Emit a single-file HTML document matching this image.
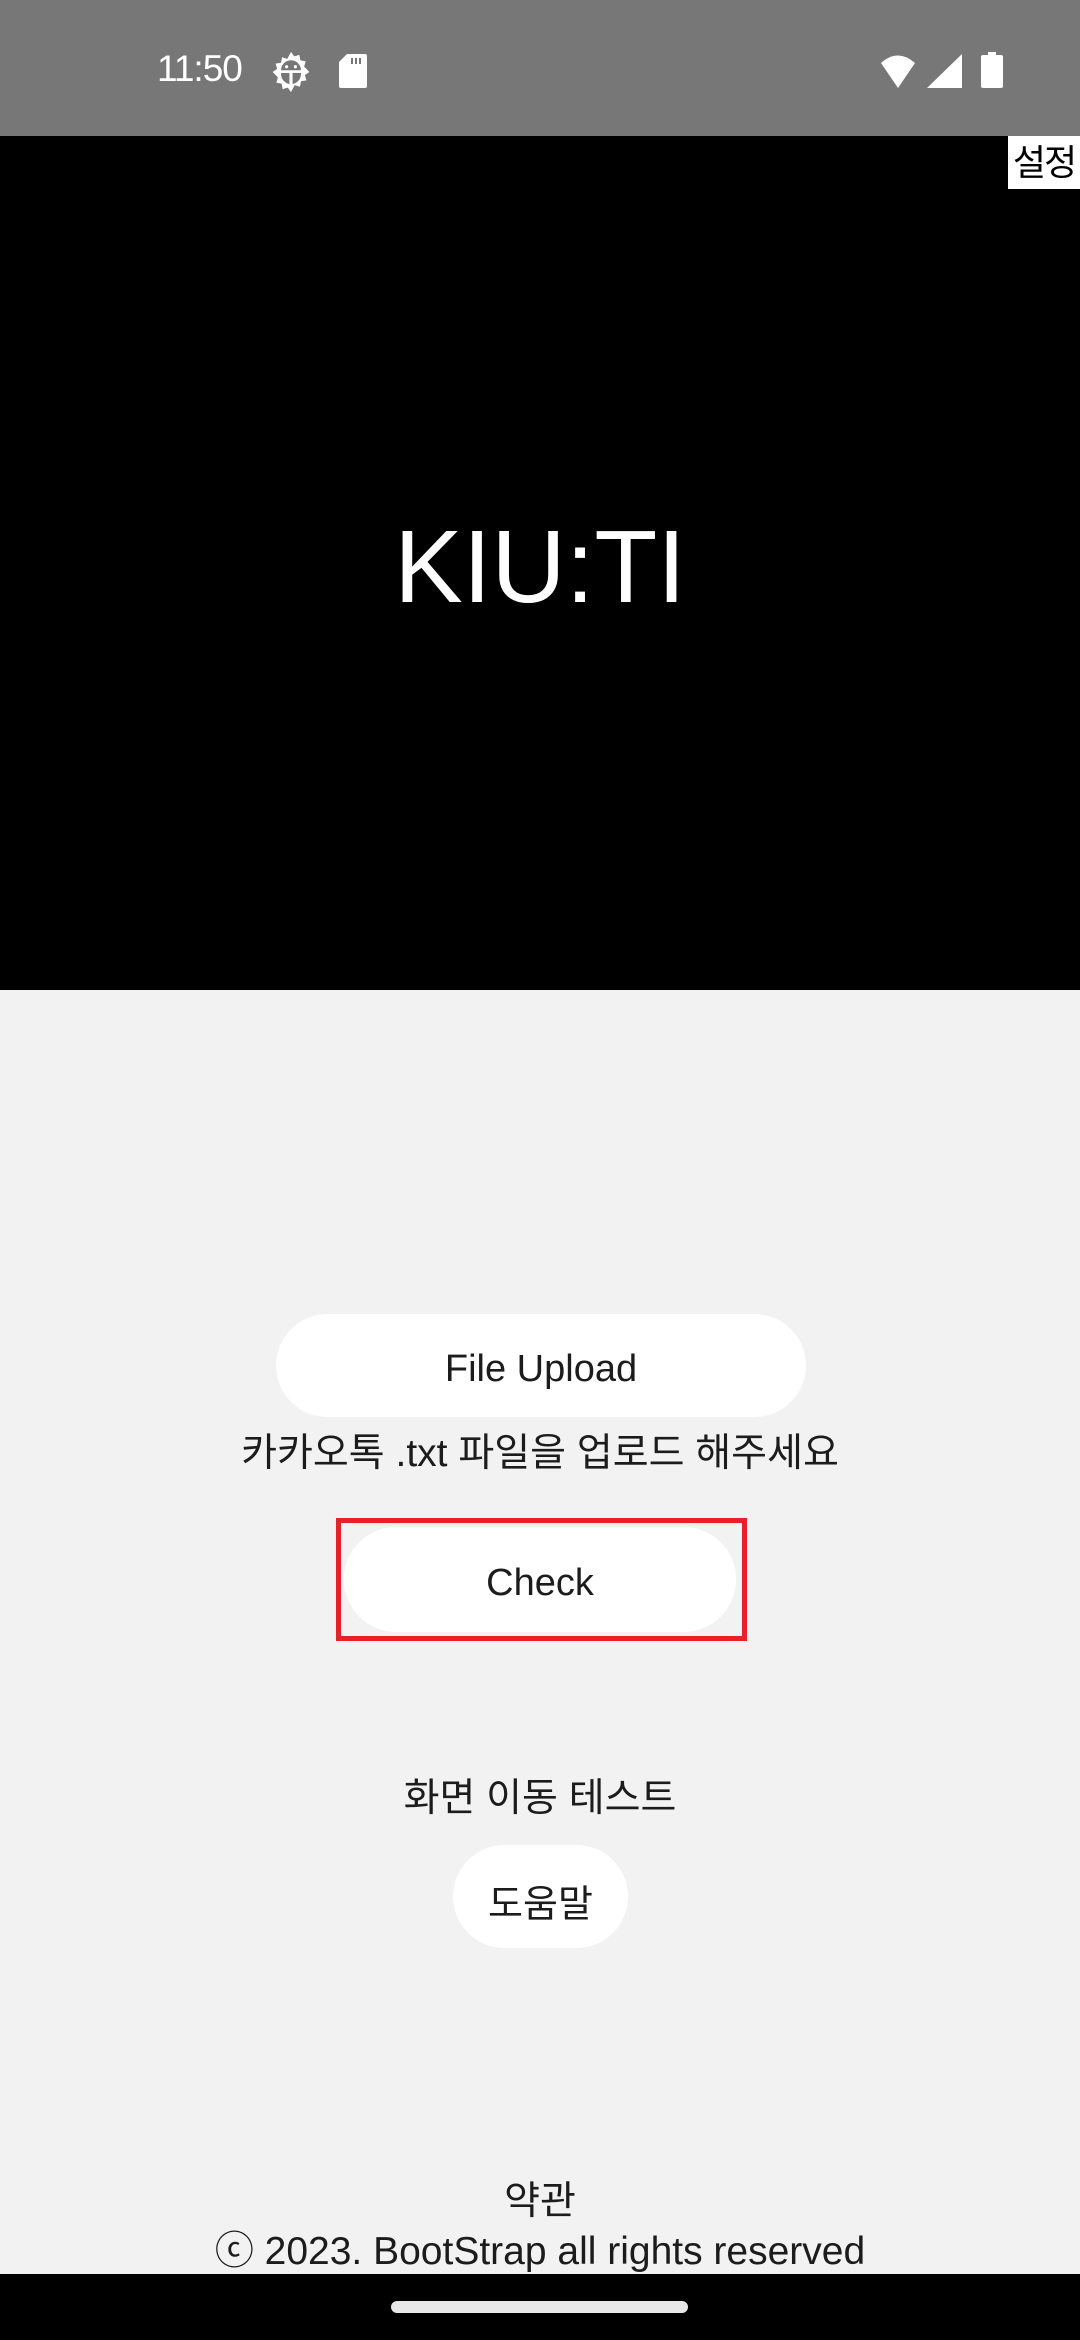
<!DOCTYPE html>
<html><head><meta charset="utf-8"><style>
*{margin:0;padding:0;box-sizing:border-box}
body{width:1080px;height:2340px;background:#f2f2f2;position:relative;overflow:hidden;font-family:"Liberation Sans","Noto Sans CJK KR",sans-serif;color:#1c1c1c}
.abs{position:absolute}
.c{position:absolute;left:0;width:1080px;text-align:center}
.btn{position:absolute;background:#fff;border-radius:52px;display:flex;align-items:center;justify-content:center;font-size:38px;color:#1c1c1c;padding-top:8px}
</style></head><body>
<div class="abs" style="left:0;top:0;width:1080px;height:136px;background:#777"></div>
<div class="abs" style="left:157px;top:48px;font-size:37px;color:#fff;letter-spacing:-1px">11:50</div>
<svg class="abs" style="left:270px;top:51px" width="42" height="42" viewBox="0 0 24 24"><path fill="#fff" d="M12 0.5l1.8 2.6 3-.9.5 3.1 3.1.6-.9 3L22.5 12l-2.6 1.8.9 3-3.1.5-.6 3.1-3-.9L12 23.5l-1.8-2.6-3 .9-.5-3.1-3.1-.6.9-3L1.5 12l2.6-1.8-.9-3 3.1-.5.6-3.1 3 .9z"/><path fill="#777" d="M6.3 11a5.7 5.7 0 0 1 11.4 0zM6.3 12.6h11.4v.6a5.7 5.7 0 0 1-11.4 0z"/><rect x="11.1" y="12.6" width="1.8" height="6.3" fill="#fff"/><circle cx="9.5" cy="9" r="0.9" fill="#fff"/><circle cx="14.5" cy="9" r="0.9" fill="#fff"/></svg>
<svg class="abs" style="left:339px;top:54px" width="28" height="34" viewBox="0 0 14 17"><path fill="#fff" d="M4 0h9a1 1 0 0 1 1 1v15a1 1 0 0 1-1 1H1a1 1 0 0 1-1-1V4z"/><rect x="6" y="2" width="1" height="3" fill="#777"/><rect x="8" y="2" width="1" height="3" fill="#777"/><rect x="10" y="2" width="1" height="3" fill="#777"/></svg>
<svg class="abs" style="left:880px;top:54px" width="36" height="34" viewBox="0 0 36 34"><path fill="#fff" d="M18 34L1 9Q18-6 35 9z"/></svg>
<svg class="abs" style="left:927px;top:54px" width="35" height="34" viewBox="0 0 35 34"><path fill="#fff" d="M35 0V34H0z"/></svg>
<svg class="abs" style="left:981px;top:52px" width="22" height="36" viewBox="0 0 22 36"><rect x="7" y="0" width="8" height="4" fill="#fff"/><rect x="0" y="3" width="22" height="33" rx="2" fill="#fff"/></svg>
<div class="abs" style="left:0;top:136px;width:1080px;height:854px;background:#000"></div>
<div class="abs" style="left:1008px;top:136px;width:72px;height:53px;background:#fff;color:#000;font-size:36px;line-height:53px;text-align:center;letter-spacing:-2px">설정</div>
<div class="c" style="top:505px;font-size:103px;color:#fff;line-height:124px">KIU:TI</div>
<div class="btn" style="left:276px;top:1314px;width:530px;height:103px">File Upload</div>
<div class="c" style="top:1429px;font-size:39px;line-height:50px">카카오톡 .txt 파일을 업로드 해주세요</div>
<div class="abs" style="left:336px;top:1518px;width:411px;height:123px;border:5px solid #e8202a"></div>
<div class="btn" style="left:344px;top:1527px;width:392px;height:105px">Check</div>
<div class="c" style="top:1774px;font-size:39px;line-height:50px">화면 이동 테스트</div>
<div class="btn" style="left:453px;top:1845px;width:175px;height:103px">도움말</div>
<div class="c" style="top:2177px;font-size:39px;line-height:50px">약관</div>
<div class="c" style="top:2227px;font-size:39px;line-height:50px">ⓒ 2023. BootStrap all rights reserved</div>
<div class="abs" style="left:0;top:2274px;width:1080px;height:66px;background:#000"></div>
<div class="abs" style="left:391px;top:2301px;width:297px;height:12px;border-radius:6px;background:#e8e8e8"></div>
</body></html>
